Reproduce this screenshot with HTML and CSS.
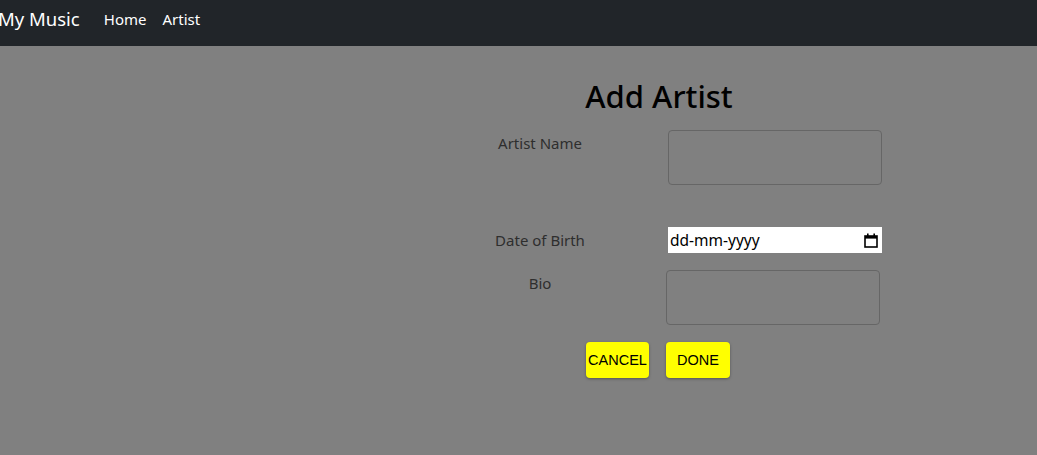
FILE: index.html
```html
<!DOCTYPE html>
<html>
<head>
<meta charset="utf-8">
<link rel="stylesheet" href="styles.css">
</head>
<body>
<nav class="navbar">
  <span class="brand">My Music</span>
  <a class="nav-link">Home</a>
  <a class="nav-link">Artist</a>
</nav>
<main class="page">
  <form class="form">
    <h1 class="title">Add Artist</h1>
    <div class="row row-name">
      <label class="label">Artist Name</label>
      <div class="field"><input class="box box-name" type="text"></div>
    </div>
    <div class="row row-date">
      <label class="label label-date">Date of Birth</label>
      <div class="field">
        <div class="date">
          <span class="date-text">dd-mm-yyyy</span>
          <svg class="cal" width="14" height="15" viewBox="0 0 14 15">
            <rect x="1" y="3" width="12" height="11" fill="none" stroke="#000" stroke-width="1.6"/>
            <rect x="1" y="3" width="12" height="2.6" fill="#000"/>
            <rect x="3" y="0.5" width="1.6" height="3" fill="#000"/>
            <rect x="9.4" y="0.5" width="1.6" height="3" fill="#000"/>
          </svg>
        </div>
      </div>
    </div>
    <div class="row row-bio">
      <label class="label">Bio</label>
      <div class="field field-bio"><textarea class="box box-bio"></textarea></div>
    </div>
    <div class="actions">
      <button type="button" class="btn">CANCEL</button>
      <button type="button" class="btn">DONE</button>
    </div>
  </form>
</main>
</body>
</html>
```
FILE: styles.css
```css
* { box-sizing: border-box; }
html, body { margin: 0; padding: 0; }
body {
  background: #808080;
  font-family: "Noto Sans", "Open Sans", sans-serif;
  width: 1037px;
  height: 455px;
  overflow: hidden;
}
.navbar {
  height: 46px;
  background: #212529;
  display: flex;
  align-items: flex-start;
  padding: 6px 0 0 0;
  color: #fff;
}
.brand {
  font-size: 18.5px;
  margin-left: -2px;
  margin-right: 24px;
  line-height: 26px;
}
.nav-link {
  font-size: 15px;
  line-height: 26px;
  margin-right: 16px;
  color: #fff;
}
.page {
  display: flex;
}
.form {
  margin-left: 420px;
  width: 478px;
  display: flex;
  flex-direction: column;
}
.title {
  margin: 28px 0 0 0;
  text-align: center;
  font-size: 31px;
  font-weight: 500;
  line-height: 44px;
  color: #000;
}
.row {
  display: flex;
  align-items: flex-start;
}
.row-name { margin-top: 12px; }
.row-date { margin-top: 42px; }
.row-bio { margin-top: 17px; }
.label {
  width: 240px;
  text-align: center;
  font-size: 15px;
  color: #2e2e2e;
  padding-top: 3px;
  line-height: 20px;
}
.label-date { padding-top: 3px; }
.field { margin-left: 8px; }
.field-bio { margin-left: 6px; }
.box {
  display: block;
  width: 214px;
  height: 55px;
  border: 1px solid #666;
  border-radius: 4px;
  background: transparent;
  resize: none;
  font: inherit;
}
.date {
  display: flex;
  align-items: center;
  justify-content: space-between;
  width: 214px;
  height: 26px;
  background: #fff;
  padding: 0 4px 0 2px;
  color: #000;
}
.date-text {
  font-size: 15.5px;
  line-height: 26px;
}
.cal { display: block; }
.actions {
  display: flex;
  justify-content: center;
  gap: 17px;
  margin-top: 17px;
  padding-right: 2px;
}
.btn {
  height: 36px;
  width: 63px;
  padding: 0;
  background: #ffff00;
  border: none;
  border-radius: 4px;
  box-shadow: 0 1px 3px rgba(0,0,0,0.35);
  font-family: "Liberation Sans", Arial, sans-serif;
  font-size: 14.5px;
  color: #000;
}
.btn:last-child { width: 64px; }
```
